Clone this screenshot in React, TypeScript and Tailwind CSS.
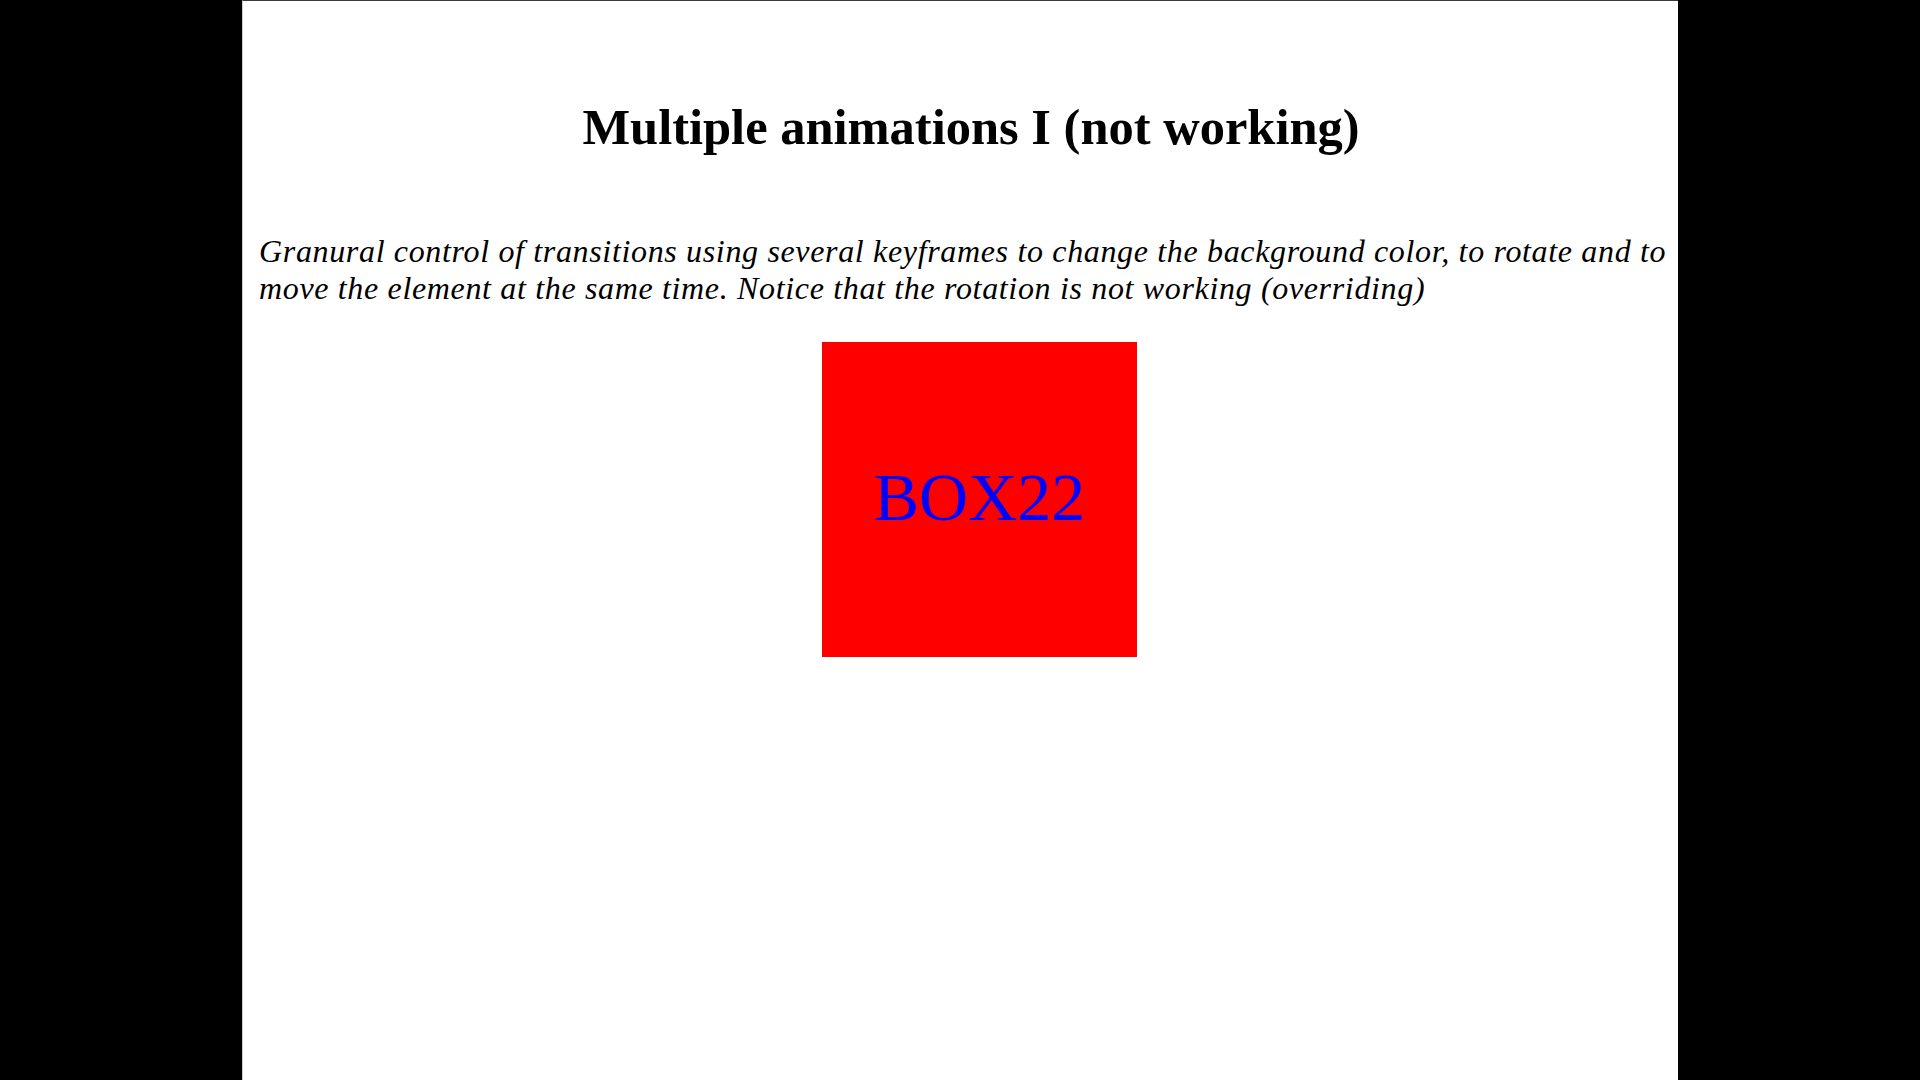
export default function App() {
  return (
    <div className="flex h-screen w-full justify-center bg-black">
      <div className="h-full w-[1436px] border-t border-l border-t-[#3a3a3a] border-l-[#d0d0d0] bg-white pt-[101px] pl-[16px] font-['Liberation_Serif',serif] text-black">
        <h1 className="pl-[5px] text-center text-[50.5px] leading-none font-bold">Multiple animations I (not working)</h1>
        <p className="mt-[80px] text-[32px] leading-[37px] tracking-[0.66px] italic whitespace-nowrap">
          Granural control of transitions using several keyframes to change the background color, to rotate and to
          <br />
          move the element at the same time. Notice that the rotation is not working (overriding)
        </p>
        <div className="mt-[35px] ml-[563px] flex h-[315px] w-[315px] items-center justify-center bg-[#ff0000]">
          <span className="pb-[5px] text-[68px] leading-none text-[#0000ff]">BOX22</span>
        </div>
      </div>
    </div>
  );
}
